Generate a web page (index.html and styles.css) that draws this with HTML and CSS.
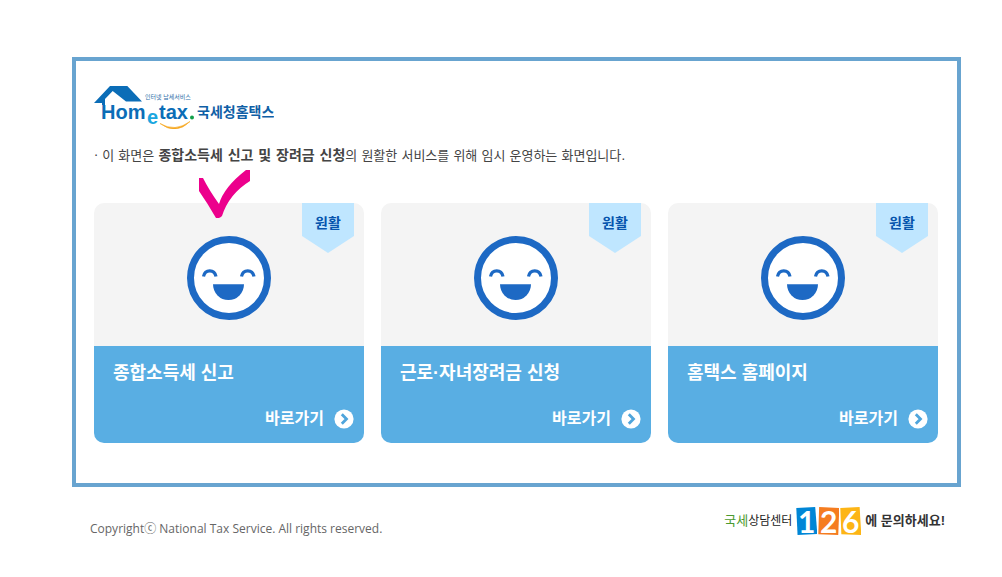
FILE: index.html
```html
<!DOCTYPE html>
<html lang="ko">
<head>
    <meta charset="UTF-8">
    <meta name="viewport" content="width=device-width, initial-scale=1.0">
    <title>국세청홈택스</title>
    <link rel="stylesheet" href="styles.css">
</head>
<body>

    <!-- Shared icons -->
    <svg class="sprite" aria-hidden="true">
        <symbol id="icon-smile" viewBox="0 0 84 84">
            <circle cx="42" cy="42" r="38.5" fill="#fff" stroke="#1d69c4" stroke-width="7"/>
            <path d="M16.500 40.500C18 33 27.500 33 29 40.500M54.500 40.500C56 33 65.500 33 67 40.500" fill="none" stroke="#1d69c4" stroke-width="3.2"/>
            <path d="M26 48.3h31a15.5 15.7 0 0 1-31 0z" fill="#1d69c4"/>
        </symbol>
        <symbol id="icon-go" viewBox="0 0 20 20">
            <circle cx="10" cy="10" r="9.6" fill="#fff"/>
            <path d="M7.8 5.2l4.7 4.8-4.7 4.8" fill="none" stroke="#4fa5dc" stroke-width="2.8"/>
        </symbol>
    </svg>

    <main class="frame">
        <h1 class="logo">
            <svg width="180" height="44" viewBox="0 0 180 44" role="img" aria-label="Hometax 국세청홈택스">
                <path d="M0 18L16 1H33.300L48 16.500H32L18.700 6L11 14V20H8V18z" fill="#0b6db7"/>
                <text class="logo-tag" x="51" y="14">인터넷 납세서비스</text>
                <text class="logo-word" x="7" y="34">Hom</text>
                <text class="logo-e" x="53" y="39">e</text>
                <text class="logo-word" x="65" y="34">tax</text>
                <circle cx="98" cy="32.500" r="2" fill="#12a04a"/>
                <path d="M66 38.500Q81 47.500 96 36.500Q82 50.500 66 38.500z" fill="#f6a821" stroke="#f6a821" stroke-width=".6"/>
                <text class="logo-name" x="103" y="32">국세청홈택스</text>
            </svg>
        </h1>

        <p class="notice">· 이 화면은 <strong>종합소득세 신고 및 장려금 신청</strong>의 원활한 서비스를 위해 임시 운영하는 화면입니다.</p>

        <div class="cards">
            <a class="card" href="#">
                <span class="card-top">
                    <span class="badge">원활</span>
                    <svg class="face"><use href="#icon-smile"/></svg>
                    <svg class="check" viewBox="0 0 51 48"><path d="M0 8H4Q10 20 20 34Q25 17 47 0H51V11Q30 24 23 46Q20 49 17 48Q9 34 0 21z" fill="#ec008c"/></svg>
                </span>
                <span class="card-body">
                    <span class="card-title">종합소득세 신고</span>
                    <span class="card-go">바로가기 <svg class="go"><use href="#icon-go"/></svg></span>
                </span>
            </a>
            <a class="card" href="#">
                <span class="card-top">
                    <span class="badge">원활</span>
                    <svg class="face"><use href="#icon-smile"/></svg>
                </span>
                <span class="card-body">
                    <span class="card-title">근로·자녀장려금 신청</span>
                    <span class="card-go">바로가기 <svg class="go"><use href="#icon-go"/></svg></span>
                </span>
            </a>
            <a class="card" href="#">
                <span class="card-top">
                    <span class="badge">원활</span>
                    <svg class="face"><use href="#icon-smile"/></svg>
                </span>
                <span class="card-body">
                    <span class="card-title">홈택스 홈페이지</span>
                    <span class="card-go">바로가기 <svg class="go"><use href="#icon-go"/></svg></span>
                </span>
            </a>
        </div>
    </main>

    <footer class="footer">
        <p class="copyright">Copyrightⓒ National Tax Service. All rights reserved.</p>
        <p class="contact">
            <span><span class="contact-nts">국세</span><span class="contact-center">상담센터</span></span>
            <span class="tiles"><b class="tile blue">1</b><b class="tile orange">2</b><b class="tile yellow">6</b></span>
            <span class="contact-ask">에 문의하세요!</span>
        </p>
    </footer>

</body>
</html>
```
FILE: styles.css
```css
/* General Styling */
* {
    box-sizing: border-box;
}

body {
    font-family: "Liberation Sans", "Noto Sans CJK KR", sans-serif;
    background-color: #fff;
    color: #444;
    margin: 0;
    padding: 57px 41px 0 72px;
}

.sprite {
    display: none;
}

.frame {
    border: 4px solid #68a4d0;
    padding: 24px 19px 40px 18px;
}

/* Logo */
.logo {
    margin: 0;
    height: 44px;
}

.logo svg {
    display: block;
}

.logo-word {
    font-size: 20px;
    font-weight: bold;
    fill: #0b6db7;
}

.logo-e {
    font-size: 20px;
    font-weight: bold;
    fill: #1aa7e0;
}

.logo-tag {
    font-size: 6px;
    font-weight: normal;
    fill: #2d6fa8;
}

.logo-name {
    font-size: 14px;
    font-weight: bold;
    fill: #0f5fa6;
}

.notice {
    font-family: "DejaVu Sans", "Noto Sans CJK KR", sans-serif;
    font-size: 13px;
    line-height: 20px;
    margin: 16px 0 37px;
}

.notice strong {
    font-size: 14px;
}

/* Cards */
.cards {
    display: grid;
    grid-template-columns: repeat(3, 1fr);
    gap: 17px;
}

.card {
    color: #fff;
    text-decoration: none;
}

.card-top {
    position: relative;
    display: flex;
    justify-content: center;
    padding: 33px 0 26px;
    background-color: #f4f4f4;
    border-radius: 10px 10px 0 0;
}

.face {
    width: 84px;
    height: 84px;
}

.badge {
    position: absolute;
    top: 0;
    right: 10px;
    width: 52px;
    height: 50px;
    background-color: #bfe6ff;
    clip-path: polygon(0 0, 100% 0, 100% 66%, 50% 100%, 0 66%);
    color: #0654ad;
    font-size: 14px;
    font-weight: bold;
    line-height: 40px;
    text-align: center;
}

.check {
    position: absolute;
    top: -33px;
    left: 105px;
    width: 51px;
    height: 48px;
}

.card-body {
    display: flex;
    flex-direction: column;
    gap: 22px;
    padding: 14px 10px 13px 19px;
    background-color: #59aee3;
    border-radius: 0 0 10px 10px;
    font-weight: bold;
}

.card-title {
    font-size: 18px;
    line-height: 26px;
}

.card-go {
    display: flex;
    justify-content: flex-end;
    align-items: center;
    gap: 10px;
    font-size: 16px;
    line-height: 22px;
}

.go {
    width: 20px;
    height: 20px;
}

/* Footer */
.footer {
    display: flex;
    justify-content: space-between;
    padding: 16px 16px 0 18px;
}

.copyright {
    margin: 16px 0 0;
    color: #666;
    font-family: "Open Sans", "Noto Sans CJK KR", sans-serif;
    font-size: 12px;
    line-height: 20px;
}

.contact {
    display: flex;
    align-items: center;
    gap: 4px;
    margin: 0;
    color: #333;
    font-size: 13px;
    line-height: 28px;
}

.contact-nts {
    color: #4b9a2f;
}

.contact-center {
    color: #222;
    font-size: 12px;
}

.tiles {
    display: flex;
    gap: 1px;
}

.tile {
    width: 21px;
    height: 28px;
    color: #fff;
    font-family: Lato, sans-serif;
    font-size: 30px;
    line-height: 28px;
    text-align: center;
}

.blue {
    background-color: #0086d6;
    clip-path: polygon(0 4%, 90% 0, 100% 96%, 6% 100%);
}

.orange {
    background-color: #f57c20;
    clip-path: polygon(4% 0, 100% 4%, 95% 100%, 0 97%);
}

.yellow {
    background-color: #fdb515;
    clip-path: polygon(0 4%, 92% 0, 100% 100%, 5% 97%);
}

.contact-ask {
    font-weight: bold;
}
```
